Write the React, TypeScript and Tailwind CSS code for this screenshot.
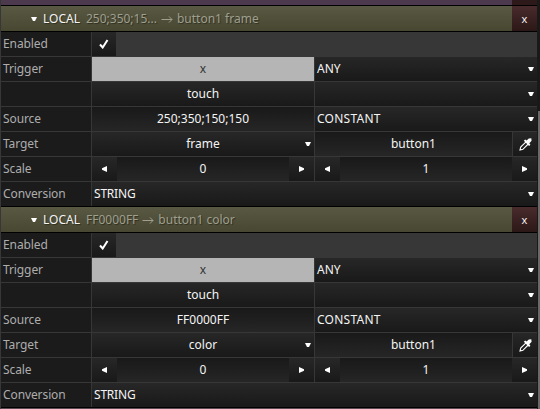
import type { ReactNode } from "react";

const RAISED = "bg-linear-to-b from-[#272727] to-[#191919]";
const SUNKEN = "bg-linear-to-b from-[#191919] to-[#262626]";

function Tri({ dir }: { dir: "down" | "left" | "right" }) {
  const points = { down: "0,0 6,0 4,4 2,4", left: "5,0 5,6 0,3.7 0,2.3", right: "0,0 5,2.3 5,3.7 0,6" }[dir];
  return (
    <svg width={dir === "down" ? 6 : 5} height={dir === "down" ? 4 : 6} className="shrink-0" fill="#fff">
      <polygon points={points} />
    </svg>
  );
}

function Row({ label, children }: { label?: string; children: ReactNode }) {
  return (
    <div className="flex h-[25px] border-b border-[#373737] last:border-black">
      <div className="w-[91px] shrink-0 border-r border-[#373737] bg-[#1b1b1b] pl-0.5 leading-6 tracking-[-0.1px] text-[#adadad]">{label}</div>
      {children}
    </div>
  );
}

function Select({ value, className = "" }: { value?: string; className?: string }) {
  return (
    <div className={"flex flex-1 items-center justify-between pr-[3px] pl-0.5 " + RAISED}>
      <span className={className}>{value}</span>
      <Tri dir="down" />
    </div>
  );
}

function Left({ children, className }: { children: ReactNode; className: string }) {
  return (
    <div className="w-[223px] shrink-0 border-r border-[#373737]">
      <div className={"relative flex h-full items-center justify-center " + className}>{children}</div>
    </div>
  );
}

function Stepper({ value }: { value: string }) {
  return (
    <div className="flex h-full w-[222px]">
      <div className={"flex w-[25px] items-center justify-center " + RAISED}><Tri dir="left" /></div>
      <div className={"flex flex-1 items-center justify-center " + SUNKEN}>{value}</div>
      <div className={"flex w-[25px] items-center justify-center " + RAISED}><Tri dir="right" /></div>
    </div>
  );
}

function Message({ source, summary, name, text }: { source: string; summary: string; name: string; text: string }) {
  return (
    <section>
      <header className="flex h-[26px] border-b border-black">
        <div className="flex w-[511px] items-center bg-linear-to-b from-[#585843] to-[#484832] pl-[30px] [text-shadow:1px_1px_1px_#0006]">
          <Tri dir="down" />
          <span className="ml-1.5">LOCAL</span>
          <span className="ml-1.5 text-[#9f9f8e]">{summary}</span>
          <svg width="12" height="8" className="ml-1" fill="none" stroke="#9f9f8e"><path d="M.5 4.5H11M8 1.5L11 4.5L8 7.5" /></svg>
          <span className="ml-1 text-[#9f9f8e]">button1 {name}</span>
        </div>
        <div className="flex flex-1 items-center justify-center bg-linear-to-b from-[#492b2c] to-[#2c1717] text-[11px]">x</div>
      </header>
      <Row label="Enabled">
        <div className="flex-1 bg-[#373737]">
          <div className={"flex h-full w-6 items-center justify-center " + RAISED}>
            <svg width="10" height="10" fill="none" stroke="#fff" strokeWidth="2"><path d="M1 5.5L3.7 8.5L8.5 1" /></svg>
          </div>
        </div>
      </Row>
      <Row label="Trigger">
        <Left className="bg-[#b5b5b5] text-[#333]">x</Left>
        <Select value="ANY" />
      </Row>
      <Row>
        <Left className={RAISED}>touch</Left>
        <Select />
      </Row>
      <Row label="Source">
        <Left className={SUNKEN}>{text}</Left>
        <Select value="CONSTANT" className="tracking-[0.25px]" />
      </Row>
      <Row label="Target">
        <Left className={RAISED}>
          {source}
          <span className="absolute top-[10px] right-[3px] flex"><Tri dir="down" /></span>
        </Left>
        <div className={"flex w-[197px] items-center justify-center " + SUNKEN}>button1</div>
        <div className={"flex flex-1 items-center justify-center border-l border-[#373737] " + RAISED}>
          <svg width="13" height="13" viewBox="0 0 13 13">
            <path d="M7 3.8L1.7 9.1L1 12L3.9 11.3L9.2 6" fill="none" stroke="#fff" strokeWidth="1.1" />
            <path d="M4.8 2.8L6.2 1.6L7.6 2.6L9.8.4L12.3.3L12.6 2.8L10.3 5.2L11.4 6.8L10.1 8Z" fill="#fff" />
          </svg>
        </div>
      </Row>
      <Row label="Scale">
        <Left className=""><Stepper value="0" /></Left>
        <Stepper value="1" />
      </Row>
      <Row label="Conversion"><Select value="STRING" className="tracking-[-0.2px]" /></Row>
    </section>
  );
}

export default function App() {
  return (
    <div className="flex h-[409px] w-[540px] overflow-hidden bg-[#191919] font-['Noto_Sans',sans-serif] text-[12px] leading-6 text-[#f4f4f4]">
      <div className="w-px bg-[#373737]" />
      <main className="w-[536px]">
        <div className="flex h-1.5 border-b border-black">
          <div className="w-[511px] bg-[#4d394e]" />
          <div className="flex-1 bg-[#2e191a]" />
        </div>
        <Message source="frame" name="frame" summary="250;350;15..." text="250;350;150;150" />
        <Message source="color" name="color" summary="FF0000FF" text="FF0000FF" />
        <div className="h-px bg-[#594850]" />
      </main>
      <div className="w-px" />
      <div className="mt-[111px] w-0.5 bg-[#696969]" />
    </div>
  );
}
